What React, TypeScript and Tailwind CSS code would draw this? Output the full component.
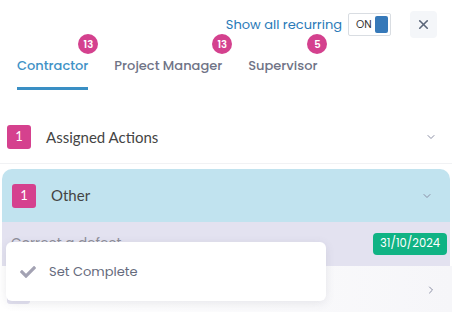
import { ChevronDown, ChevronRight, X } from "lucide-react"
import { FaCheck } from "react-icons/fa"

const Tab = ({ label, count, active }: { label: string; count: number; active?: boolean }) => {
    return (
        <div className="relative flex flex-col">
            <span
                className={`h-[43px] flex items-center text-[13px] font-medium ${active ? "text-[#4192c6]" : "text-[#6f7386]"}`}
            >
                {label}
            </span>
            <div className={`h-[3px] ${active ? "bg-[#3a8fc4]" : ""}`} />
            <span className="absolute -top-[10px] -right-[10px] w-[20px] h-[20px] rounded-full bg-[#d4418e] text-white text-[10px] font-semibold flex items-center justify-center">
                {count}
            </span>
        </div>
    )
}

export default function App() {
    return (
        <div className="w-[452px] h-[312px] overflow-hidden bg-white relative" style={{ fontFamily: "Poppins, 'Noto Sans', sans-serif" }}>
            <div className="flex items-center justify-end pt-[11px] pr-[15px] h-[38px]">
                <span className="text-[13px] text-[#2a7ab8] mr-[6px]">Show all recurring</span>
                <div className="w-[43px] h-[23px] border border-[#d9dde2] rounded-[2px] flex items-center justify-between pl-[7px] pr-[2px] mr-[19px]">
                    <span className="text-[10.5px] text-[#333]">ON</span>
                    <div className="w-[13px] h-[17px] bg-[#3679b9] rounded-[2px]" />
                </div>
                <button className="w-[27px] h-[27px] rounded-[4px] bg-[#f4f6f9] flex items-center justify-center">
                    <X size={15} strokeWidth={2.6} className="text-[#5a6679]" />
                </button>
            </div>

            <div className="relative mt-[6px]">
                <div className="flex gap-[26px] pl-[17px]">
                    <Tab label="Contractor" count={13} active />
                    <Tab label="Project Manager" count={13} />
                    <Tab label="Supervisor" count={5} />
                </div>
                <div className="absolute left-0 right-0 bottom-0 h-[3px] bg-[#eaf0f5] -z-10" />
            </div>

            <div className="mt-[34px] flex items-center h-[26px] pl-[7px] pr-[15px]" style={{ fontFamily: "Lato, sans-serif" }}>
                <span className="w-[24px] h-[24px] rounded-[3px] bg-[#d5418e] text-white text-[13px] flex items-center justify-center">1</span>
                <span className="ml-[15px] text-[15px] text-[#444] flex-1">Assigned Actions</span>
                <ChevronDown size={12} className="text-[#8a8ea4]" />
            </div>
            <div className="mt-[13px] h-px bg-[#f1f2f4]" />

            <div className="mt-[5px] ml-[2px] mr-[2px] rounded-t-[10px] bg-[#c1e3ef]">
                <div className="flex items-center h-[53px] pl-[10px] pr-[17px]" style={{ fontFamily: "Lato, sans-serif" }}>
                    <span className="w-[24px] h-[24px] rounded-[3px] bg-[#d5418e] text-white text-[13px] flex items-center justify-center">1</span>
                    <span className="ml-[15px] text-[15px] text-[#444] flex-1">Other</span>
                    <ChevronDown size={12} className="text-[#8a8ea4]" />
                </div>
                <div className="flex items-center justify-between h-[44px] bg-[#e3e2f0] pl-[9px] pr-[3px]">
                    <span className="text-[13.5px] text-[#8d8d98]">Correct a defect</span>
                    <span className="h-[22px] px-[7px] rounded-[4px] bg-[#10b384] text-white text-[11.5px] flex items-center">31/10/2024</span>
                </div>
            </div>

            <div className="flex justify-between h-[47px] pl-[7px] pr-[15px] bg-gradient-to-r from-white to-[#f6f6f9]">
                <span className="mt-[14px] w-[23px] h-[24px] rounded-[3px] bg-[#e3e2f0]" />
                <ChevronRight size={12} className="self-center text-[#8a8ea4]" />
            </div>

            <div className="absolute left-[6px] top-[242px] w-[320px] h-[59px] bg-white rounded-[6px] shadow-[0_2px_10px_rgba(80,80,110,0.12)] flex items-center pl-[13px]">
                <FaCheck size={16} className="text-[#a3a2b3] ml-[1px]" />
                <span className="ml-[13px] text-[13px] text-[#666b7d]">Set Complete</span>
            </div>
        </div>
    )
}
